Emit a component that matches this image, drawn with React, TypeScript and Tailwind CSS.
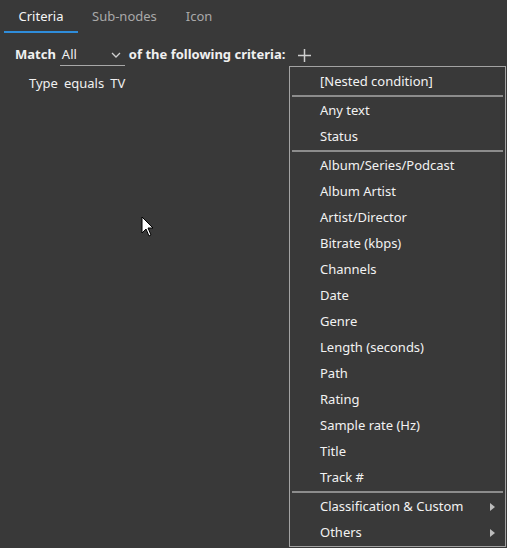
import React from 'react';

const fieldItems = [
  'Album/Series/Podcast',
  'Album Artist',
  'Artist/Director',
  'Bitrate (kbps)',
  'Channels',
  'Date',
  'Genre',
  'Length (seconds)',
  'Path',
  'Rating',
  'Sample rate (Hz)',
  'Title',
  'Track #',
];

const MenuItem: React.FC<{ label: string; submenu?: boolean }> = ({ label, submenu }) => (
  <div className="relative flex h-[26px] items-center pl-[30px] pt-[1px] text-[13px] text-[#f2f2f2]">
    <span>{label}</span>
    {submenu && (
      <svg className="absolute right-[10px] top-[10px]" width="5" height="8" viewBox="0 0 5 8">
        <path d="M0 0 L5 4 L0 8 Z" fill="#bdbdbd" />
      </svg>
    )}
  </div>
);

const Separator = () => (
  <div className="px-[2px] pt-[1px]">
    <div className="h-[2px] bg-[#8c8c8c]" />
  </div>
);

const Pointer = () => (
  <svg className="pointer-events-none absolute left-[141px] top-[216px]" width="14" height="22" viewBox="0 0 14 22">
    <path
      d="M1 1 L1 17 L5 13 L8 20 L10 19 L7 12 L12 12 Z"
      fill="#fff"
      stroke="#000"
      strokeWidth="1"
      strokeLinejoin="miter"
    />
  </svg>
);

export default function App() {
  return (
    <div
      className="relative h-[548px] w-[507px] overflow-hidden bg-[#393939] text-[13px] text-[#f0f0f0]"
      style={{ fontFamily: '"Noto Sans", "Open Sans", sans-serif' }}
    >
      {/* tab strip */}
      <div className="flex h-[33px] items-start pl-[4px]">
        <div className="flex h-[33px] w-[74px] flex-col items-center">
          <span className="mt-[7px] text-[#f5f5f5]">Criteria</span>
          <div className="mt-auto h-[2px] w-full bg-[#2f8ddb]" />
        </div>
        <span className="ml-[14px] mt-[7px] text-[#a9a9a9]">Sub-nodes</span>
        <span className="ml-[29px] mt-[7px] text-[#a9a9a9]">Icon</span>
      </div>

      {/* match row */}
      <div className="mt-[11px] flex h-[22px] items-center pl-[15px]">
        <span className="font-bold">Match</span>
        <div className="ml-[4px] flex h-[22px] w-[65px] items-center border-b border-[#a8a8a8] pl-[2px]">
          <span>All</span>
          <svg className="ml-auto mr-[4px]" width="10" height="6" viewBox="0 0 10 6">
            <path d="M1 1 L5 5 L9 1" fill="none" stroke="#d0d0d0" strokeWidth="1.3" />
          </svg>
        </div>
        <span className="ml-[4px] font-bold">of the following criteria:</span>
        <svg className="ml-[13px]" width="13" height="13" viewBox="0 0 13 13">
          <path d="M6.5 0 V13 M0 6.5 H13" stroke="#cfcfcf" strokeWidth="1.5" />
        </svg>
      </div>

      {/* existing condition */}
      <div className="mt-[8px] flex gap-[6px] pl-[29px]">
        <span>Type</span>
        <span>equals</span>
        <span>TV</span>
      </div>

      <Pointer />

      {/* add-criterion dropdown */}
      <div className="absolute left-[289px] top-[66px] w-[217px] border border-[#a3a3a3] bg-[#393939] py-[1px]">
        <MenuItem label="[Nested condition]" />
        <Separator />
        <MenuItem label="Any text" />
        <MenuItem label="Status" />
        <Separator />
        {fieldItems.map((f) => (
          <MenuItem key={f} label={f} />
        ))}
        <Separator />
        <MenuItem label="Classification & Custom" submenu />
        <MenuItem label="Others" submenu />
      </div>
    </div>
  );
}
